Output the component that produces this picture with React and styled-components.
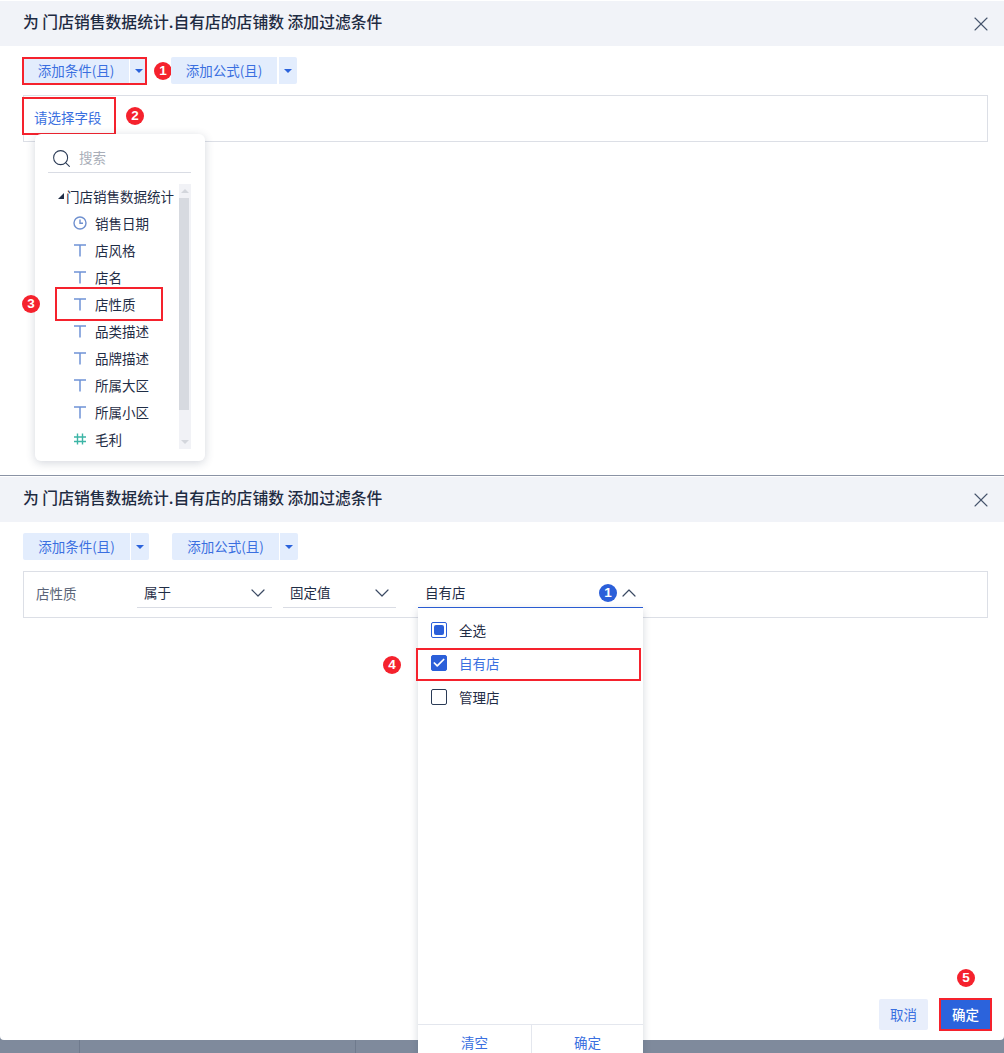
import React from 'react';
import styled, { createGlobalStyle } from 'styled-components';
import { ChevronDown, ChevronUp, Search, X, Check } from 'lucide-react';

const GlobalStyle = createGlobalStyle`
  html, body {
    margin: 0;
    padding: 0;
    background: #7f8a9c;
  }
  *, *::before, *::after {
    box-sizing: border-box;
  }
`;

const Page = styled.div`
  position: relative;
  width: 1004px;
  height: 1053px;
  overflow: hidden;
  display: flex;
  flex-direction: column;
  font-family: "Noto Sans CJK SC", "Noto Sans", sans-serif;
  font-size: 13.5px;
  color: #1f2d46;
  background: linear-gradient(90deg, #7f8a9c 79px, #6f7a8d 79px, #6f7a8d 80px, #7f8a9c 80px, #7f8a9c 355px, #6f7a8d 355px, #6f7a8d 356px, #7f8a9c 356px);
`;

const Panel = styled.section`
  position: relative;
  flex: none;
  height: ${props => props.$height}px;
  padding-top: 1px;
  background: #fff;
  display: flex;
  flex-direction: column;
  border-radius: ${props => (props.$last ? '0 0 4px 4px' : '0')};
`;

const Separator = styled.div`
  flex: none;
  height: 1px;
  background: #8a93a5;
`;

const Header = styled.header`
  flex: none;
  height: 45px;
  padding: 0 11px 0 23px;
  display: flex;
  align-items: center;
  justify-content: space-between;
  background: #f1f3f8;
  color: #1e2b42;
`;

const Title = styled.h2`
  margin: 0;
  padding-bottom: 3px;
  font-size: 15.8px;
  font-weight: 500;
  line-height: 22px;
  white-space: nowrap;
`;

const CloseButton = styled.span`
  display: flex;
  color: #46546c;
`;

const Toolbar = styled.div`
  flex: none;
  margin: ${props => props.$top}px 0 0 23px;
  display: flex;
  align-items: center;
  height: 27px;
`;

const SplitGroup = styled.div`
  position: relative;
  display: flex;
  gap: ${props => props.$gap || 1}px;
  height: 27px;
  margin-right: ${props => props.$after || 0}px;
  ${props => props.$marked && `
    &::after {
      content: '';
      position: absolute;
      left: -1px;
      right: 0;
      top: 0;
      bottom: -1px;
      border: 2px solid #f5222d;
    }
  `}
`;

const MainButton = styled.button`
  width: ${props => props.$width}px;
  padding: 0 0 2px;
  border: 0;
  border-radius: 2px 0 0 2px;
  background: #e3edfd;
  color: #3a6fe0;
  font: inherit;
  font-size: 13.5px;
`;

const ArrowButton = styled.button`
  width: ${props => props.$width}px;
  padding: 0;
  border: 0;
  border-radius: 0 2px 2px 0;
  background: #e3edfd;
  display: flex;
  align-items: center;
  justify-content: center;
  &::before {
    content: '';
    border-left: 4px solid transparent;
    border-right: 4px solid transparent;
    border-top: 4.5px solid #2b63dc;
  }
`;

const Badge = styled.span`
  flex: none;
  width: 18px;
  height: 18px;
  border-radius: 50%;
  background: ${props => (props.$blue ? '#2b5fd9' : '#f5222d')};
  color: #fff;
  font-family: "Liberation Sans", sans-serif;
  font-size: 13.5px;
  font-weight: 700;
  line-height: 18px;
  text-align: center;
`;

const FlowBadge = styled(Badge)`
  margin-left: ${props => props.$left}px;
  margin-right: ${props => props.$right || 0}px;
  margin-top: ${props => props.$top || 0}px;
`;

const FloatingBadge = styled(Badge)`
  position: absolute;
  left: ${props => props.$x}px;
  top: ${props => props.$y}px;
  z-index: 3;
`;

const ConditionBox = styled.div`
  position: relative;
  flex: none;
  width: 965px;
  height: 47px;
  margin: 11px 0 0 23px;
  border: 1px solid #dcdfe6;
  display: flex;
  align-items: flex-start;
`;

const FieldPicker = styled.button`
  flex: none;
  width: 94px;
  height: 38px;
  margin: 1px 0 0 -2px;
  padding: 1px 0 0 10px;
  border: 2px solid #f5222d;
  background: #fff;
  color: #3a6fe0;
  font: inherit;
  text-align: left;
`;

const FieldPopup = styled.div`
  position: absolute;
  left: 11px;
  top: 38px;
  width: 170px;
  height: 327px;
  padding: 0 14px 0 13px;
  background: #fff;
  border-radius: 6px;
  box-shadow: 0 2px 10px rgba(40, 55, 85, 0.2);
  z-index: 2;
`;

const SearchRow = styled.div`
  height: 39px;
  margin-bottom: 11px;
  padding: 10px 0 0 3px;
  display: flex;
  align-items: center;
  gap: 7px;
  border-bottom: 1px solid #d9dce4;
  color: #a9aeb8;
  svg {
    color: #2a3a55;
  }
`;

const SearchHint = styled.span`
  padding-bottom: 2px;
`;

const TreeArea = styled.div`
  display: flex;
  height: 265px;
  justify-content: space-between;
`;

const Tree = styled.ul`
  margin: 0;
  padding: 0;
  list-style: none;
  overflow: hidden;
  flex: 1;
`;

const RootRow = styled.li`
  height: 27px;
  margin-top: -2px;
  padding-left: 10px;
  display: flex;
  align-items: center;
  gap: 2px;
  white-space: nowrap;
  &::before {
    content: '';
    border-left: 6px solid transparent;
    border-bottom: 6px solid #1f2d46;
  }
`;

const FieldRow = styled.li`
  position: relative;
  height: 27px;
  padding-left: 24px;
  display: flex;
  align-items: center;
  gap: 7px;
  white-space: nowrap;
  ${props => props.$marked && `
    &::after {
      content: '';
      position: absolute;
      left: 7px;
      top: -3px;
      width: 108px;
      height: 34px;
      border: 2px solid #f5222d;
    }
  `}
`;

const ScrollTrack = styled.div`
  flex: none;
  position: relative;
  width: 12px;
  background: #f1f2f6;
  &::before, &::after {
    content: '';
    position: absolute;
    left: 2px;
    border-left: 4px solid transparent;
    border-right: 4px solid transparent;
  }
  &::before {
    top: 5px;
    border-bottom: 4px solid #d3d6dc;
  }
  &::after {
    bottom: 5px;
    border-top: 4px solid #d3d6dc;
  }
`;

const ScrollThumb = styled.div`
  margin-top: 14px;
  width: 10px;
  height: 212px;
  background: #d7dae0;
`;

const ConditionLabel = styled.span`
  flex: none;
  width: 113px;
  padding-left: 12px;
  color: #5a6478;
  margin-top: 11px;
`;

const Select = styled.div`
  position: relative;
  flex: none;
  width: ${props => props.$width}px;
  height: 28px;
  margin: 8px ${props => props.$after}px 0 0;
  padding: 0 2px 3px 7px;
  display: flex;
  align-items: center;
  justify-content: space-between;
  border-bottom: 1px solid ${props => (props.$open ? '#2b5fd9' : '#d9dce4')};
  color: #1f2d46;
`;

const SelectEnd = styled.span`
  display: flex;
  align-items: center;
  margin-top: 2px;
  color: #3b4a63;
`;

const OptionsMenu = styled.div`
  position: absolute;
  left: 0;
  top: 28px;
  width: 225px;
  height: 452px;
  padding-top: 5px;
  background: #fff;
  display: flex;
  flex-direction: column;
  box-shadow: 0 2px 8px rgba(40, 55, 85, 0.2);
  z-index: 2;
`;

const Option = styled.div`
  position: relative;
  height: 33.5px;
  padding-left: 13px;
  display: flex;
  align-items: center;
  gap: 12px;
  font-size: 13.5px;
  color: ${props => (props.$active ? '#3a6fe0' : '#1f2d46')};
  ${props => props.$marked && `
    &::after {
      content: '';
      position: absolute;
      left: -2px;
      right: 2px;
      top: 1px;
      bottom: -1px;
      border: 2px solid #f5222d;
    }
  `}
`;

const CheckBox = styled.span`
  flex: none;
  width: 16px;
  height: 16px;
  border-radius: 2px;
  border: 1px solid ${props => (props.$state === 'off' ? '#2a3a55' : '#2b5fd9')};
  background: ${props => (props.$state === 'on' ? '#2b5fd9' : '#fff')};
  display: flex;
  align-items: center;
  justify-content: center;
  color: #fff;
`;

const PartialMark = styled.span`
  width: 10px;
  height: 10px;
  border-radius: 2px;
  background: #2b5fd9;
`;

const MenuFooter = styled.div`
  margin-top: auto;
  flex: none;
  height: 36px;
  display: flex;
  border-top: 1px solid #e4e7ee;
`;

const MenuAction = styled.button`
  flex: none;
  width: ${props => props.$width}px;
  padding: 0 0 2px;
  border: 0;
  background: #fff;
  color: #3a6fe0;
  font: inherit;
  font-size: 13.5px;
  & + & {
    border-left: 1px solid #e4e7ee;
  }
`;

const Footer = styled.div`
  margin-top: auto;
  padding: 0 12px 9px 0;
  display: flex;
  justify-content: flex-end;
  align-items: center;
  gap: 11px;
`;

const CancelButton = styled.button`
  width: 49px;
  height: 31px;
  padding: 0 0 1px;
  border: 0;
  border-radius: 2px;
  background: #e8eefb;
  color: #3a6fe0;
  font: inherit;
  font-size: 13.5px;
`;

const ConfirmButton = styled.button`
  width: 53px;
  height: 33px;
  padding: 0 0 1px;
  border: 2px solid #f5222d;
  background: #2b63dc;
  color: #fff;
  font: inherit;
  font-size: 13.5px;
  font-weight: 500;
`;

const TextIcon = () => (
  <svg width="16" height="16" viewBox="0 0 16 16" fill="none" stroke="#6f93d6" strokeWidth="1.5">
    <path d="M2 3h12M8 3v11.5" />
  </svg>
);

const NumberIcon = () => (
  <svg width="16" height="16" viewBox="0 0 16 16" fill="none" stroke="#3cb5a6" strokeWidth="1.4">
    <path d="M2 6h12M2 10.5h12M5.5 2.5v11M10.5 2.5v11" />
  </svg>
);

const DateIcon = () => (
  <svg width="16" height="16" viewBox="0 0 16 16" fill="none" stroke="#6f90cf" strokeWidth="1.4">
    <circle cx="8" cy="8" r="6" />
    <path d="M8 4.5V8.3h3" />
  </svg>
);

const fields = [
  { name: '销售日期', icon: DateIcon },
  { name: '店风格', icon: TextIcon },
  { name: '店名', icon: TextIcon },
  { name: '店性质', icon: TextIcon, marked: true },
  { name: '品类描述', icon: TextIcon },
  { name: '品牌描述', icon: TextIcon },
  { name: '所属大区', icon: TextIcon },
  { name: '所属小区', icon: TextIcon },
  { name: '毛利', icon: NumberIcon },
];

const title = '为 门店销售数据统计.自有店的店铺数 添加过滤条件';

const DialogHeader = () => (
  <Header>
    <Title>{title}</Title>
    <CloseButton><X size={24} strokeWidth={1.1} /></CloseButton>
  </Header>
);

const App = () => {
  return (
    <Page>
      <GlobalStyle />

      <Panel $height={475}>
        <DialogHeader />
        <Toolbar $top={11}>
          <SplitGroup $marked>
            <MainButton $width={106}>添加条件(且)</MainButton>
            <ArrowButton $width={17} />
          </SplitGroup>
          <FlowBadge $left={7} $right={-1}>1</FlowBadge>
          <SplitGroup $gap={2}>
            <MainButton $width={106}>添加公式(且)</MainButton>
            <ArrowButton $width={18} />
          </SplitGroup>
        </Toolbar>
        <ConditionBox>
          <FieldPicker>请选择字段</FieldPicker>
          <FlowBadge $left={10} $top={11}>2</FlowBadge>
          <FieldPopup>
            <SearchRow>
              <Search size={21} strokeWidth={1.2} />
              <SearchHint>搜索</SearchHint>
            </SearchRow>
            <TreeArea>
              <Tree>
                <RootRow>门店销售数据统计</RootRow>
                {fields.map(field => (
                  <FieldRow key={field.name} $marked={field.marked}>
                    <field.icon />
                    {field.name}
                  </FieldRow>
                ))}
              </Tree>
              <ScrollTrack>
                <ScrollThumb />
              </ScrollTrack>
            </TreeArea>
          </FieldPopup>
        </ConditionBox>
        <FloatingBadge $x={22} $y={295}>3</FloatingBadge>
      </Panel>

      <Separator />

      <Panel $height={564} $last>
        <DialogHeader />
        <Toolbar $top={11}>
          <SplitGroup $after={23}>
            <MainButton $width={107}>添加条件(且)</MainButton>
            <ArrowButton $width={18} />
          </SplitGroup>
          <SplitGroup>
            <MainButton $width={107}>添加公式(且)</MainButton>
            <ArrowButton $width={18} />
          </SplitGroup>
        </Toolbar>
        <ConditionBox>
          <ConditionLabel>店性质</ConditionLabel>
          <Select $width={135} $after={11}>
            属于
            <SelectEnd><ChevronDown size={24} strokeWidth={1.2} /></SelectEnd>
          </Select>
          <Select $width={113} $after={22}>
            固定值
            <SelectEnd><ChevronDown size={24} strokeWidth={1.2} /></SelectEnd>
          </Select>
          <Select $width={225} $after={0} $open>
            自有店
            <SelectEnd>
              <Badge $blue>1</Badge>
              <ChevronUp size={24} strokeWidth={1.2} />
            </SelectEnd>
            <OptionsMenu>
              <Option>
                <CheckBox $state="partial"><PartialMark /></CheckBox>
                全选
              </Option>
              <Option $active $marked>
                <CheckBox $state="on"><Check size={14} strokeWidth={3} /></CheckBox>
                自有店
              </Option>
              <Option>
                <CheckBox $state="off" />
                管理店
              </Option>
              <MenuFooter>
                <MenuAction $width={113}>清空</MenuAction>
                <MenuAction $width={112}>确定</MenuAction>
              </MenuFooter>
            </OptionsMenu>
          </Select>
        </ConditionBox>
        <FloatingBadge $x={383} $y={180}>4</FloatingBadge>
        <FloatingBadge $x={957} $y={493}>5</FloatingBadge>
        <Footer>
          <CancelButton>取消</CancelButton>
          <ConfirmButton>确定</ConfirmButton>
        </Footer>
      </Panel>
    </Page>
  );
};

export default App;
